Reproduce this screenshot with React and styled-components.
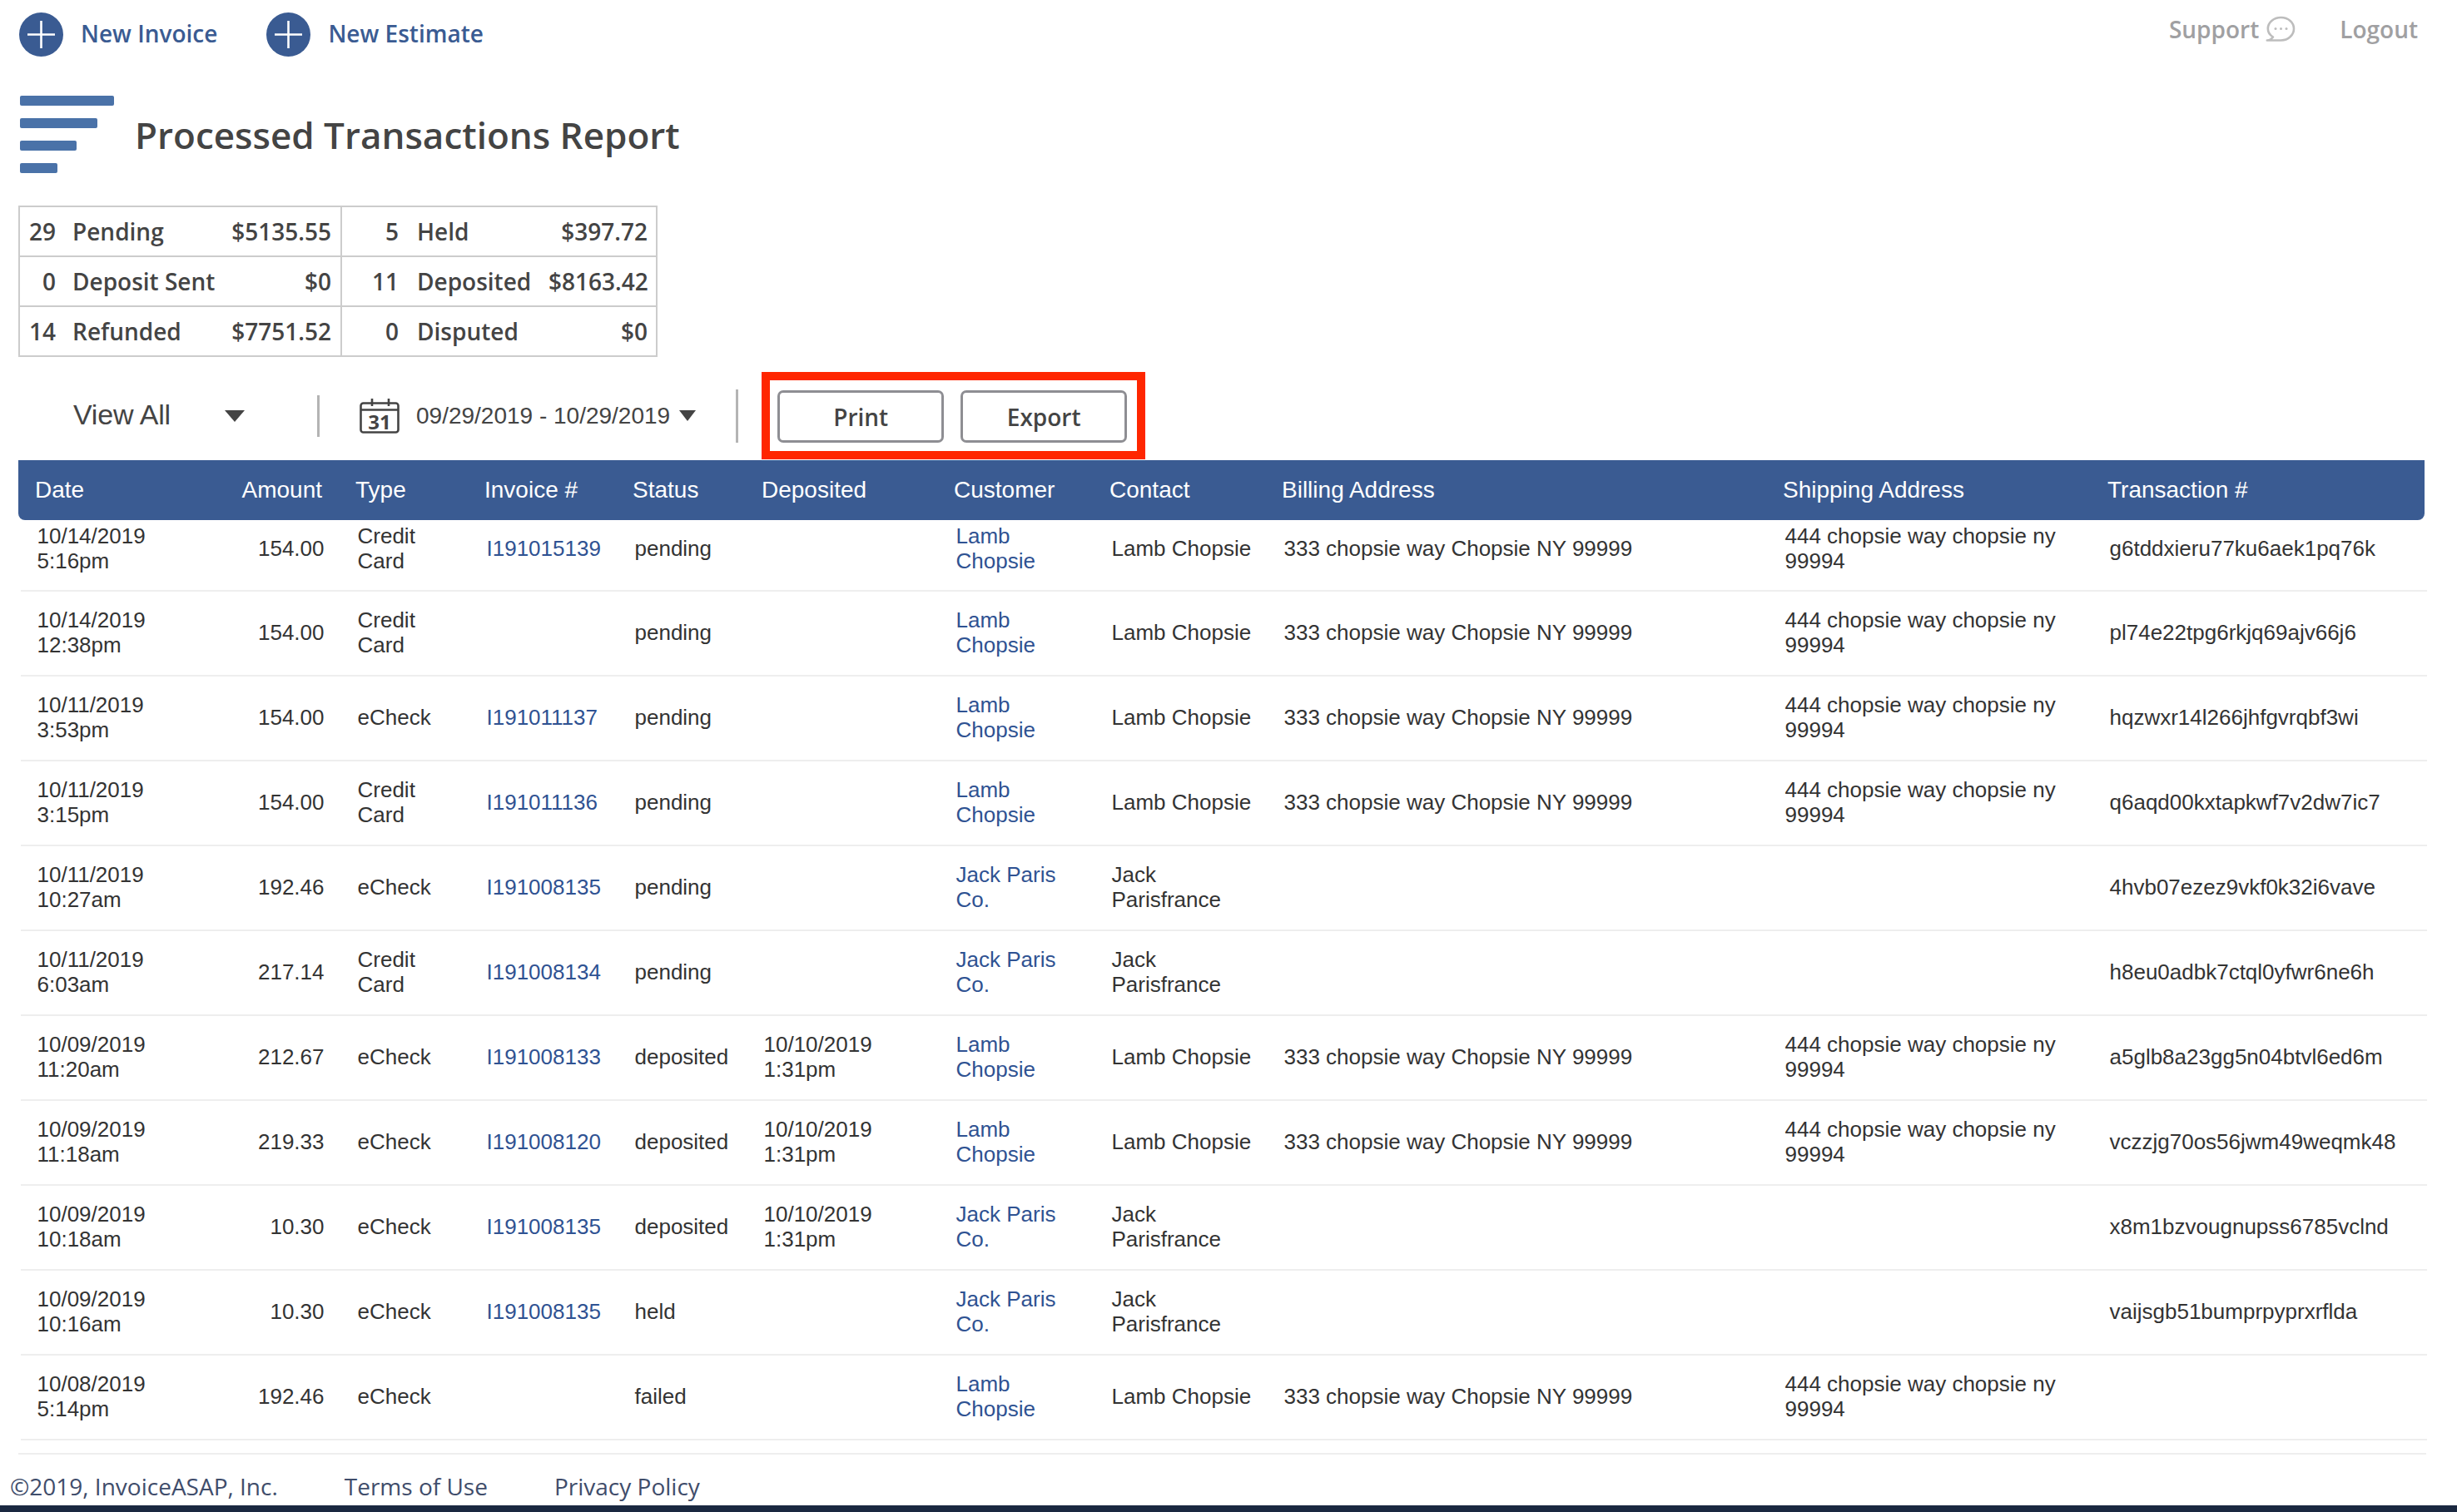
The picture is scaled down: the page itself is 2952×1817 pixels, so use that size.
import React from "react";
import styled, { createGlobalStyle } from "styled-components";

const Global = createGlobalStyle`
  html, body { margin: 0; padding: 0; background: #fff; }
  body { font-family: "Open Sans", "Liberation Sans", sans-serif; }
`;

const BLUE = "#3a5b92";
const ARIAL = `"Liberation Sans", Arial, sans-serif`;
const COLS = [230, 155, 155, 178, 155, 231, 187, 207, 602, 390, 401];

const Page = styled.div`
  width: 2952px;
  height: 1817px;
  display: flex;
  flex-direction: column;
  overflow: hidden;
  position: relative;
`;
const Top = styled.header`
  display: flex;
  justify-content: space-between;
  padding: 15px 47px 0 23px;
  height: 53px;
`;
const Group = styled.div`
  display: flex;
  align-items: ${(p) => p.$align || "center"};
  gap: ${(p) => p.$gap}px;
`;
const NewLink = styled.a`
  display: flex;
  align-items: center;
  gap: 21px;
  color: ${BLUE};
  font-size: 28px;
  font-weight: 600;
`;
const NewLabel = styled.span`
  margin-bottom: 4px;
`;
const TopLink = styled.a`
  display: flex;
  align-items: center;
  gap: 8px;
  height: 39px;
  color: #a0a0a2;
  font-size: 28px;
  font-weight: 600;
`;
const TitleRow = styled.div`
  display: flex;
  align-items: center;
  gap: 25px;
  margin: 47px 0 0 24px;
`;
const Bars = styled.div`
  display: flex;
  flex-direction: column;
  gap: 15px;
  width: 113px;
`;
const Bar = styled.div`
  height: 12px;
  width: ${(p) => p.$w}px;
  background: #4a72a8;
  border-radius: 2px;
`;
const Title = styled.h1`
  margin: 0;
  font-size: 44px;
  font-weight: 600;
  color: #444;
`;
const Summary = styled.table`
  margin: 39px 0 0 22px;
  width: 766px;
  border-collapse: collapse;
  table-layout: fixed;
  font-size: 28px;
  font-weight: 600;
  color: #444;
  border: 2px solid #ccc;
  tr { height: 60px; border-bottom: 2px solid #ccc; }
  td { padding: 0; white-space: nowrap; }
`;
const Num = styled.td`
  text-align: right;
  padding-right: 10px !important;
`;
const Lab = styled.td`
  padding-left: ${(p) => p.$pad}px !important;
`;
const Amt = styled.td`
  text-align: right;
  padding-right: ${(p) => (p.$divide ? 11 : 10)}px !important;
  border-right: ${(p) => (p.$divide ? "2px solid #ccc" : "none")};
`;
const Toolbar = styled.div`
  display: flex;
  align-items: center;
  margin: 18px 0 0 88px;
  color: #444;
  font-family: ${ARIAL};
`;
const ViewAll = styled.div`
  width: 182px;
  font-size: 34px;
  letter-spacing: -0.2px;
  margin-bottom: 2px;
`;
const Caret = styled.div`
  width: 0;
  height: 0;
  border-left: ${(p) => p.$s}px solid transparent;
  border-right: ${(p) => p.$s}px solid transparent;
  border-top: ${(p) => p.$h}px solid #444;
`;
const Sep = styled.div`
  width: 3px;
  height: ${(p) => p.$h}px;
  background: #b4b4b4;
  margin: ${(p) => p.$m};
`;
const DateRange = styled.div`
  font-size: 28px;
  margin: 0 11px 0 20px;
`;
const Annotated = styled.div`
  display: flex;
  gap: 20px;
  padding: 12px 12px 10px 9px;
  border: 10px solid #ff2600;
`;
const Btn = styled.button`
  width: 200px;
  height: 63px;
  background: #fff;
  border: 3px solid #8e8e93;
  border-radius: 7px;
  font-family: "Open Sans", sans-serif;
  font-size: 28px;
  font-weight: 600;
  color: #444;
  padding: 0;
`;
const Grid = styled.table`
  border-collapse: separate;
  border-spacing: 0;
  table-layout: fixed;
  width: 2891px;
  font-family: ${ARIAL};
  font-size: 26px;
  line-height: 30px;
`;
const Head = styled(Grid)`
  margin: 1px 0 0 22px;
  background: ${BLUE};
  color: #fff;
  border-bottom-left-radius: 8px;
  border-bottom-right-radius: 8px;
  th {
    height: 72px;
    padding: 0 20px;
    font-weight: 400;
    text-align: left;
    font-size: 28px;
    white-space: nowrap;
  }
`;
const Body = styled(Grid)`
  margin: 0 0 0 24.5px;
  color: #333;
  td {
    height: 98px;
    padding: 0 20px 2px;
    border-bottom: 2px solid #eee;
    vertical-align: middle;
  }
  tr:first-child td {
    height: 67px;
    padding-bottom: 17px;
  }
`;
const Right = styled.td`
  text-align: right;
`;
const HeadRight = styled.th`
  && { text-align: right; }
`;
const ContactCell = styled.td`
  && { padding-right: 10px; }
`;
const Link = styled.a`
  color: #2f5292;
`;
const Rule = styled.div`
  height: 2px;
  margin: 15px 37px 0 22px;
  background: #eee;
`;
const Footer = styled.footer`
  display: flex;
  align-items: center;
  height: 47px;
  padding: 14px 0 0 12px;
  font-size: 28px;
  color: #3f4d6b;
`;
const FootLink = styled.a`
  margin-left: ${(p) => p.$m}px;
`;
const Band = styled.div`
  height: 8px;
  background: #1a2840;
  margin-top: auto;
`;

const Plus = () => (
  <svg width="53" height="53" viewBox="0 0 53 53">
    <circle cx="26.5" cy="26.5" r="26.5" fill={BLUE} />
    <path d="M26.5 10v33M10 26.5h33" stroke="#fff" strokeWidth="2.6" />
  </svg>
);
const Bubble = () => (
  <svg width="36" height="32" viewBox="0 0 36 32">
    <path d="M9 25.5C5 23 2.8 19.4 2.8 15.5 2.8 8 9.6 2 18.5 2S34 8 34 15.5 27.4 29.5 18.5 29.5H1.8C4.5 29.5 7 28 9 25.5Z" fill="none" stroke="#bdbdbd" strokeWidth="2.6" strokeLinejoin="round" />
    <circle cx="12" cy="15.5" r="1.5" fill="#bdbdbd" />
    <circle cx="18.5" cy="15.5" r="1.5" fill="#bdbdbd" />
    <circle cx="25" cy="15.5" r="1.5" fill="#bdbdbd" />
  </svg>
);
const Calendar = () => (
  <svg width="48" height="42" viewBox="0 0 48 42">
    <rect x="1.5" y="5.5" width="45" height="35" rx="3" fill="none" stroke="#444" strokeWidth="2.6" />
    <path d="M1.5 13.5h45M15 0v9M35 0v9" stroke="#444" strokeWidth="2.6" fill="none" />
    <text x="24" y="37" textAnchor="middle" fontFamily="Open Sans, sans-serif" fontWeight="700" fontSize="24" fill="#444">31</text>
  </svg>
);

const LAMB = { customer: "Lamb Chopsie", contact: "Lamb Chopsie", bill: "333 chopsie way Chopsie NY 99999", ship: "444 chopsie way chopsie ny 99994" };
const JACK = { customer: "Jack Paris Co.", contact: "Jack Parisfrance", bill: "", ship: "" };
const DEP = "10/10/2019 1:31pm";
const ROWS = [
  ["10/14/2019 5:16pm", "154.00", "Credit Card", "I191015139", "pending", "", LAMB, "g6tddxieru77ku6aek1pq76k"],
  ["10/14/2019 12:38pm", "154.00", "Credit Card", "", "pending", "", LAMB, "pl74e22tpg6rkjq69ajv66j6"],
  ["10/11/2019 3:53pm", "154.00", "eCheck", "I191011137", "pending", "", LAMB, "hqzwxr14l266jhfgvrqbf3wi"],
  ["10/11/2019 3:15pm", "154.00", "Credit Card", "I191011136", "pending", "", LAMB, "q6aqd00kxtapkwf7v2dw7ic7"],
  ["10/11/2019 10:27am", "192.46", "eCheck", "I191008135", "pending", "", JACK, "4hvb07ezez9vkf0k32i6vave"],
  ["10/11/2019 6:03am", "217.14", "Credit Card", "I191008134", "pending", "", JACK, "h8eu0adbk7ctql0yfwr6ne6h"],
  ["10/09/2019 11:20am", "212.67", "eCheck", "I191008133", "deposited", DEP, LAMB, "a5glb8a23gg5n04btvl6ed6m"],
  ["10/09/2019 11:18am", "219.33", "eCheck", "I191008120", "deposited", DEP, LAMB, "vczzjg70os56jwm49weqmk48"],
  ["10/09/2019 10:18am", "10.30", "eCheck", "I191008135", "deposited", DEP, JACK, "x8m1bzvougnupss6785vclnd"],
  ["10/09/2019 10:16am", "10.30", "eCheck", "I191008135", "held", "", JACK, "vaijsgb51bumprpyprxrflda"],
  ["10/08/2019 5:14pm", "192.46", "eCheck", "", "failed", "", LAMB, ""],
];
const HEADS = ["Date", "Amount", "Type", "Invoice #", "Status", "Deposited", "Customer", "Contact", "Billing Address", "Shipping Address", "Transaction #"];
const SUMMARY = [
  [["29", "Pending", "$5135.55"], ["5", "Held", "$397.72"]],
  [["0", "Deposit Sent", "$0"], ["11", "Deposited", "$8163.42"]],
  [["14", "Refunded", "$7751.52"], ["0", "Disputed", "$0"]],
];
const Cols = () => (
  <colgroup>
    {COLS.map((w, i) => (
      <col key={i} style={{ width: w }} />
    ))}
  </colgroup>
);

export default function App() {
  return (
    <Page>
      <Global />
      <Top>
        <Group $gap={59}>
          <NewLink><Plus /><NewLabel>New Invoice</NewLabel></NewLink>
          <NewLink><Plus /><NewLabel>New Estimate</NewLabel></NewLink>
        </Group>
        <Group $gap={53} $align="flex-start">
          <TopLink>Support <Bubble /></TopLink>
          <TopLink>Logout</TopLink>
        </Group>
      </Top>
      <TitleRow>
        <Bars>
          <Bar $w={113} />
          <Bar $w={93} />
          <Bar $w={68} />
          <Bar $w={45} />
        </Bars>
        <Title>Processed Transactions Report</Title>
      </TitleRow>
      <Summary>
        <colgroup>
          <col style={{ width: 54 }} /><col style={{ width: 190 }} /><col style={{ width: 143 }} />
          <col style={{ width: 79 }} /><col style={{ width: 170 }} /><col style={{ width: 130 }} />
        </colgroup>
        <tbody>
          {SUMMARY.map((r, i) => (
            <tr key={i}>
              <Num>{r[0][0]}</Num><Lab $pad={10}>{r[0][1]}</Lab><Amt $divide>{r[0][2]}</Amt>
              <Num>{r[1][0]}</Num><Lab $pad={12}>{r[1][1]}</Lab><Amt>{r[1][2]}</Amt>
            </tr>
          ))}
        </tbody>
      </Summary>
      <Toolbar>
        <ViewAll>View All</ViewAll>
        <Caret $s={12} $h={14} />
        <Sep $h={50} $m="0 48px 0 87px" />
        <Calendar />
        <DateRange>09/29/2019 - 10/29/2019</DateRange>
        <Caret $s={10} $h={13} />
        <Sep $h={64} $m="0 28px 0 48px" />
        <Annotated>
          <Btn>Print</Btn>
          <Btn>Export</Btn>
        </Annotated>
      </Toolbar>
      <Head>
        <Cols />
        <thead>
          <tr>
            {HEADS.map((h, i) =>
              i === 1 ? <HeadRight key={h}>{h}</HeadRight> : <th key={h}>{h}</th>
            )}
          </tr>
        </thead>
      </Head>
      <Body>
        <Cols />
        <tbody>
          {ROWS.map((r, i) => (
            <tr key={i}>
              <td>{r[0]}</td>
              <Right>{r[1]}</Right>
              <td>{r[2]}</td>
              <td><Link>{r[3]}</Link></td>
              <td>{r[4]}</td>
              <td>{r[5]}</td>
              <td><Link>{r[6].customer}</Link></td>
              <ContactCell>{r[6].contact}</ContactCell>
              <td>{r[6].bill}</td>
              <td>{r[6].ship}</td>
              <td>{r[7]}</td>
            </tr>
          ))}
        </tbody>
      </Body>
      <Rule />
      <Footer>
        ©2019, InvoiceASAP, Inc.
        <FootLink $m={80}>Terms of Use</FootLink>
        <FootLink $m={80}>Privacy Policy</FootLink>
      </Footer>
      <Band />
    </Page>
  );
}
